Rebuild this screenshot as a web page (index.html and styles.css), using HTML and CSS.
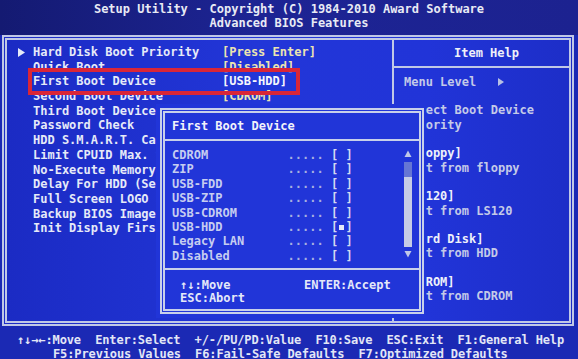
FILE: index.html
```html
<!DOCTYPE html>
<html lang="en">
<head>
<meta charset="utf-8">
<title>Award BIOS - Advanced BIOS Features</title>
<link rel="stylesheet" href="styles.css">
</head>
<body>
<header class="top">
  <div class="title-line">Setup Utility - Copyright (C) 1984-2010 Award Software</div>
  <div class="title-line">Advanced BIOS Features</div>
</header>
<main class="frame">
  <section class="items">
    <div class="row"><span class="mark"><svg width="7" height="9" viewBox="0 0 7 9"><path d="M0 0L7 4.5L0 9Z" fill="#e6eaf8"/></svg></span><span class="name">Hard Disk Boot Priority</span><span class="val">[Press Enter]</span></div>
    <div class="row"><span class="mark"></span><span class="name">Quick Boot</span><span class="val">[Disabled]</span></div>
    <div class="row"><span class="mark"></span><span class="name">First Boot Device</span><span class="val val-sel">[USB-HDD]</span></div>
    <div class="row"><span class="mark"></span><span class="name">Second Boot Device</span><span class="val">[CDROM]</span></div>
    <div class="row"><span class="mark"></span><span class="name">Third Boot Device</span></div>
    <div class="row"><span class="mark"></span><span class="name">Password Check</span></div>
    <div class="row"><span class="mark"></span><span class="name">HDD S.M.A.R.T. Capability</span></div>
    <div class="row"><span class="mark"></span><span class="name">Limit CPUID Max. to 3</span></div>
    <div class="row"><span class="mark"></span><span class="name">No-Execute Memory Protect</span></div>
    <div class="row"><span class="mark"></span><span class="name">Delay For HDD (Secs)</span></div>
    <div class="row"><span class="mark"></span><span class="name">Full Screen LOGO Show</span></div>
    <div class="row"><span class="mark"></span><span class="name">Backup BIOS Image to HDD</span></div>
    <div class="row"><span class="mark"></span><span class="name">Init Display First</span></div>
  </section>
  <aside class="help">
    <div class="help-title">Item Help</div>
    <div class="help-body">
      <div class="hl dim">Menu Level   <svg width="6" height="8" viewBox="0 0 6 8"><path d="M0 0L6 4L0 8Z" fill="#b8c0e4"/></svg></div>
      <div class="hl"></div>
      <div class="hl dim">Select Boot Device</div>
      <div class="hl dim">Priority</div>
      <div class="hl"></div>
      <div class="hl">[Floppy]</div>
      <div class="hl dim">Boot from floppy</div>
      <div class="hl"></div>
      <div class="hl">[LS120]</div>
      <div class="hl dim">Boot from LS120</div>
      <div class="hl"></div>
      <div class="hl">[Hard Disk]</div>
      <div class="hl dim">Boot from HDD</div>
      <div class="hl"></div>
      <div class="hl">[CDROM]</div>
      <div class="hl dim">Boot from CDROM</div>
    </div>
  </aside>

  <div class="redbox"></div>

  <div class="popup">
    <div class="pop-box">
      <div class="pop-title">First Boot Device</div>
      <div class="pop-list">
        <div class="opts">
          <div class="opt"><span class="on">CDROM</span><span class="dots">.....</span> <span class="br">[ ]</span></div>
          <div class="opt"><span class="on">ZIP</span><span class="dots">.....</span> <span class="br">[ ]</span></div>
          <div class="opt"><span class="on">USB-FDD</span><span class="dots">.....</span> <span class="br">[ ]</span></div>
          <div class="opt"><span class="on">USB-ZIP</span><span class="dots">.....</span> <span class="br">[ ]</span></div>
          <div class="opt"><span class="on">USB-CDROM</span><span class="dots">.....</span> <span class="br">[ ]</span></div>
          <div class="opt"><span class="on">USB-HDD</span><span class="dots">.....</span> <span class="br">[<i class="sel"></i>]</span></div>
          <div class="opt"><span class="on">Legacy LAN</span><span class="dots">.....</span> <span class="br">[ ]</span></div>
          <div class="opt"><span class="on">Disabled</span><span class="dots">.....</span> <span class="br">[ ]</span></div>
        </div>
        <div class="scroll">
          <svg width="8" height="9" viewBox="0 0 8 9"><path d="M4 1.5L7.5 8H0.5Z" fill="#c0c8e8"/></svg>
          <div class="thumb"></div>
          <div class="track"></div>
          <svg width="8" height="9" viewBox="0 0 8 9"><path d="M0.5 1H7.5L4 7.5Z" fill="#c0c8e8"/></svg>
        </div>
      </div>
      <div class="pop-keys">
        <span class="k">↑↓:Move</span><span class="k">ENTER:Accept</span>
        <span class="k">ESC:Abort</span>
      </div>
    </div>
  </div>
</main>
<footer class="keys">
  <div class="l1">↑↓→←:Move  Enter:Select  +/-/PU/PD:Value  F10:Save  ESC:Exit  F1:General Help</div>
  <div class="l2">F5:Previous Values  F6:Fail-Safe Defaults  F7:Optimized Defaults</div>
</footer>
</body>
</html>
```

FILE: styles.css
```css
* { box-sizing: border-box; margin: 0; padding: 0; }

html, body { width: 578px; height: 359px; overflow: hidden; }

body {
  font-family: "DejaVu Sans Mono", "Liberation Mono", monospace;
  font-weight: 700;
  font-size: 12px;
  color: #e4e8f8;
  background: #1b29b4;
  display: flex;
  flex-direction: column;
}

/* ---------- header ---------- */
.top {
  height: 35px;
  flex: none;
  padding-top: 2px;
  line-height: 14px;
  text-align: center;
  color: #e8eaf4;
  background: linear-gradient(90deg, #141a72 0%, #1d2494 45%, #1c2290 100%);
}
.title-line { white-space: pre; }

/* ---------- main frame ---------- */
.frame {
  position: relative;
  flex: none;
  height: 291px;
  margin: 0 4px 0 2px;
  border: 5px double #c0c8e6;
  display: grid;
  grid-template-columns: 385px 1fr;
  background: linear-gradient(90deg, #1b2bc4 0%, #2236d8 45%, #2134d8 75%, #1d2ec8 100%);
}

.items { padding-top: 5px; }

.row {
  display: grid;
  grid-template-columns: 26px 189px auto;
  height: 14.7px;
  line-height: 14.7px;
}

.mark { display: flex; align-items: center; padding-left: 11px; }
.name { color: #e6eaf8; white-space: pre; }
.val { color: #ece4b0; white-space: pre; }
.val-sel { color: #f6f6fc; }

/* ---------- item help ---------- */
.help {
  border-left: 2px solid #c0c8e6;
  display: flex;
  flex-direction: column;
}

.help-title {
  height: 28px;
  line-height: 26px;
  padding-left: 10px;
  text-align: center;
  border-bottom: 2px solid #c0c8e6;
  color: #eef0f8;
}

.help-body { padding: 6.85px 0 0 10px; }

.hl {
  height: 14.3px;
  line-height: 14.3px;
  white-space: pre;
  color: #eef0fa;
}
.hl.dim { color: #c4cae8; }

/* ---------- red annotation ---------- */
.redbox {
  position: absolute;
  left: 21px;
  top: 28px;
  width: 272px;
  height: 27px;
  border: 4px solid #d92638;
}

/* ---------- popup ---------- */
.popup {
  position: absolute;
  left: 149px;
  top: 64px;
  width: 270px;
  height: 214px;
  padding: 4px 2px 4px 4px;
  background: #2135d8;
}

.pop-box {
  height: 100%;
  border: 5px double #c8d0ea;
  display: flex;
  flex-direction: column;
}

.pop-title {
  height: 28px;
  flex: none;
  line-height: 26px;
  padding-left: 7px;
  border-bottom: 2px solid #c8d0ea;
  color: #f2f2fa;
}

.pop-list {
  height: 129px;
  flex: none;
  border-bottom: 2px solid #c8d0ea;
  padding: 7px 7px 0 7px;
  display: grid;
  grid-template-columns: 1fr 8px;
}

.opt {
  height: 14.4px;
  line-height: 14.4px;
  white-space: pre;
}
.on { display: inline-block; width: 16ch; color: #c6cdf0; }
.dots { color: #a8b0e0; }
.br { color: #d4d8f0; }
.sel {
  display: inline-block;
  width: 5px;
  height: 5px;
  margin: 0 1.1px;
  background: #e4e8f8;
  vertical-align: 1px;
}

.scroll {
  margin-top: 1px;
  display: flex;
  flex-direction: column;
}
.scroll svg { display: block; flex: none; }
.thumb { height: 15px; margin-top: 4px; background: #6676d4; }
.track { height: 70px; margin-bottom: 3px; background: #c6cce6; }

.pop-keys {
  flex: 1;
  padding: 8.5px 0 0 15px;
  line-height: 13px;
  display: grid;
  grid-template-columns: 124px auto;
  align-content: start;
  color: #e4e8f8;
}
.k { white-space: pre; }

/* ---------- bottom key bar ---------- */
.keys {
  flex: 1;
  padding-top: 8px;
  line-height: 13.5px;
  letter-spacing: -0.12px;
  color: #e2e6f6;
}
.keys .l1, .keys .l2 { white-space: pre; }
.keys .l1 { padding-left: 17px; }
.keys .l2 { padding-left: 53px; }
```
